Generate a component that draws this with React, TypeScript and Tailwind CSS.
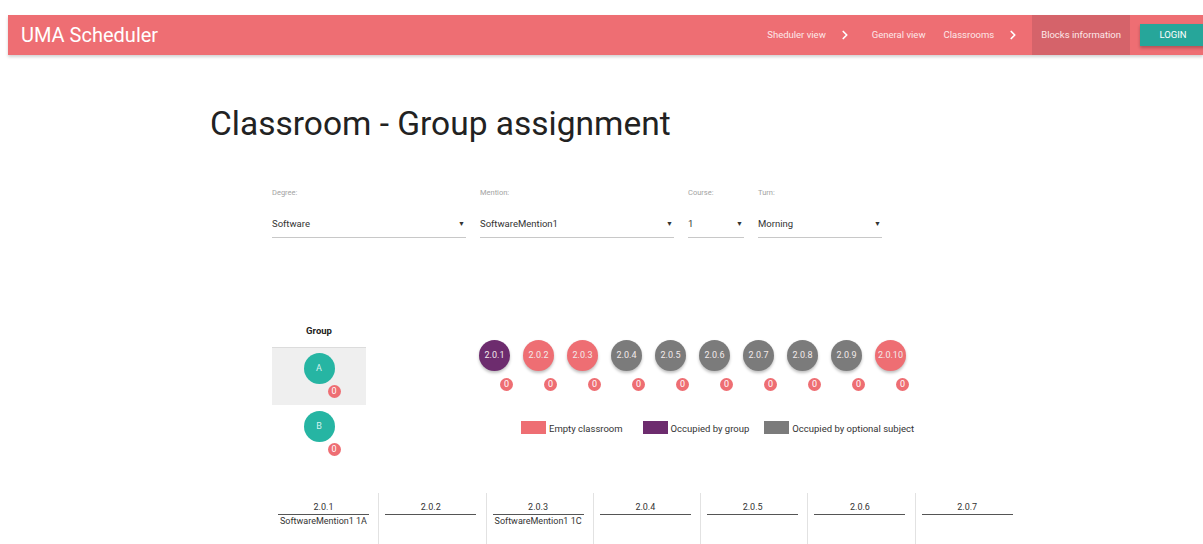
import { ChevronRight } from "lucide-react";

type RoomState = "empty" | "group" | "optional";

const ROOMS: { name: string; state: RoomState }[] = [
  { name: "2.0.1", state: "group" },
  { name: "2.0.2", state: "empty" },
  { name: "2.0.3", state: "empty" },
  { name: "2.0.4", state: "optional" },
  { name: "2.0.5", state: "optional" },
  { name: "2.0.6", state: "optional" },
  { name: "2.0.7", state: "optional" },
  { name: "2.0.8", state: "optional" },
  { name: "2.0.9", state: "optional" },
  { name: "2.0.10", state: "empty" },
];

const ROOM_COLORS: Record<RoomState, string> = {
  empty: "bg-[#ee6e73]",
  group: "bg-[#6d2c6e]",
  optional: "bg-[#7b7b7b]",
};

const ASSIGNMENTS = [
  { room: "2.0.1", group: "SoftwareMention1 1A" },
  { room: "2.0.2", group: "" },
  { room: "2.0.3", group: "SoftwareMention1 1C" },
  { room: "2.0.4", group: "" },
  { room: "2.0.5", group: "" },
  { room: "2.0.6", group: "" },
  { room: "2.0.7", group: "" },
];

function Navbar() {
  return (
    <nav className="ml-2 flex h-10 items-stretch justify-between bg-[#ee6e73] shadow-[0_2px_3px_rgba(0,0,0,0.18)]">
      <span className="flex items-center pl-[13px] text-[20px] text-white">
        UMA Scheduler
      </span>
      <div className="flex items-stretch text-[9.5px] text-[#fde8e9]">
        <span className="flex items-center">Sheduler view</span>
        <ChevronRight
          className="ml-[12px] mr-[20px] self-center text-white"
          size={14}
          strokeWidth={3}
        />
        <span className="flex items-center">General view</span>
        <span className="ml-[18px] flex items-center">Classrooms</span>
        <ChevronRight
          className="mx-[12px] self-center text-white"
          size={14}
          strokeWidth={3}
        />
        <span className="flex items-center bg-[#d5636a] px-[9px]">
          Blocks information
        </span>
        <div className="flex items-center pl-[10px]">
          <button
            type="button"
            className="h-[22px] w-[66px] -mr-[3px] bg-[#26a69a] text-[9.5px] uppercase text-white shadow-[0_2px_3px_rgba(0,0,0,0.25)]"
          >
            Login
          </button>
        </div>
      </div>
    </nav>
  );
}

function SelectField({
  label,
  value,
  width,
}: {
  label: string;
  value: string;
  width: string;
}) {
  return (
    <div className={width}>
      <p className="h-[10px] text-[7.5px] leading-[10px] text-[#a3a3a3]">
        {label}
      </p>
      <div className="mt-[10px] flex h-[30px] items-center justify-between border-b border-[#c8c8c8] pr-[1px] pt-[4px] text-[9.5px] text-[#333]">
        <span>{value}</span>
        <span className="text-[7px]">▼</span>
      </div>
    </div>
  );
}

function CountBadge({ className }: { className: string }) {
  return (
    <span
      className={`flex h-[13px] w-[13px] items-center justify-center rounded-full bg-[#ee6e73] text-[9px] leading-none text-white ${className}`}
    >
      0
    </span>
  );
}

function GroupCircle({ letter }: { letter: string }) {
  return (
    <div className="relative h-[31px] w-[31px]">
      <div className="flex h-[31px] w-[31px] items-center justify-center rounded-full bg-[#26b5a3] text-[9px] text-[#d8f3ef]">
        {letter}
      </div>
      <CountBadge className="absolute left-[24px] top-[32px]" />
    </div>
  );
}

function GroupColumn() {
  return (
    <div className="w-[94px] text-[#222]">
      <p className="flex h-[14px] items-center justify-center text-[9.5px] font-bold">
        Group
      </p>
      <div className="mt-[9px] h-[58px] border-t border-[#dcdcdc] bg-[#efefef] pt-[5px]">
        <div className="flex justify-center">
          <GroupCircle letter="A" />
        </div>
      </div>
      <div className="h-[58px] pt-[6px]">
        <div className="flex justify-center">
          <GroupCircle letter="B" />
        </div>
      </div>
    </div>
  );
}

function LegendItem({
  color,
  label,
  className = "",
}: {
  color: string;
  label: string;
  className?: string;
}) {
  return (
    <div className={`flex items-end ${className}`}>
      <span className={`h-[13px] w-[25px] ${color}`} />
      <span className="ml-[3px] text-[9.5px] leading-[11px] text-[#333]">
        {label}
      </span>
    </div>
  );
}

function ClassroomPanel() {
  return (
    <div className="ml-[113px] pt-[16px]">
      <div className="flex gap-[13px]">
        {ROOMS.map((room) => (
          <div key={room.name} className="w-[31px]">
            <div
              className={`flex h-[31px] w-[31px] items-center justify-center rounded-full text-[9px] text-[#f2eaea] shadow-[0_2px_3px_rgba(0,0,0,0.25)] ${ROOM_COLORS[room.state]}`}
            >
              {room.name}
            </div>
            <CountBadge className="ml-[21px] mt-[7px]" />
          </div>
        ))}
      </div>
      <div className="ml-[42px] mt-[30px] flex">
        <LegendItem color="bg-[#ee6e73]" label="Empty classroom" />
        <LegendItem
          color="bg-[#6d2c6e]"
          label="Occupied by group"
          className="ml-[20px]"
        />
        <LegendItem
          color="bg-[#7b7b7b]"
          label="Occupied by optional subject"
          className="ml-[15px]"
        />
      </div>
    </div>
  );
}

function AssignmentTable() {
  return (
    <div className="mt-[30px] grid w-[751px] grid-cols-7">
      {ASSIGNMENTS.map((cell, index) => (
        <div
          key={cell.room}
          className={`h-[60px] pt-[9px] ${index < ASSIGNMENTS.length - 1 ? "border-r border-[#e2e2e2]" : ""}`}
        >
          <div className="ml-[6px] w-[91px] whitespace-nowrap text-center text-[9px] text-[#333]">
            <p className="border-b border-[#555] pb-[1px] leading-[11px]">
              {cell.room}
            </p>
            <p className="mt-[1px] leading-[11px]">{cell.group}</p>
          </div>
        </div>
      ))}
    </div>
  );
}

export default function App() {
  return (
    <div className="h-[544px] w-[1203px] overflow-hidden bg-white pt-[15px] font-['Roboto','Liberation_Sans',sans-serif]">
      <Navbar />
      <main>
        <h1 className="ml-[210px] mt-[48px] text-[33.5px] leading-[42px] text-[#222]">
          Classroom - Group assignment
        </h1>
        <div className="ml-[272px]">
          <div className="mt-[43px] flex gap-[14px]">
            <SelectField label="Degree:" value="Software" width="w-[194px]" />
            <SelectField
              label="Mention:"
              value="SoftwareMention1"
              width="w-[194px]"
            />
            <SelectField label="Course:" value="1" width="w-[56px]" />
            <SelectField label="Turn:" value="Morning" width="w-[124px]" />
          </div>
          <div className="mt-[86px] flex">
            <GroupColumn />
            <ClassroomPanel />
          </div>
          <AssignmentTable />
        </div>
      </main>
    </div>
  );
}
